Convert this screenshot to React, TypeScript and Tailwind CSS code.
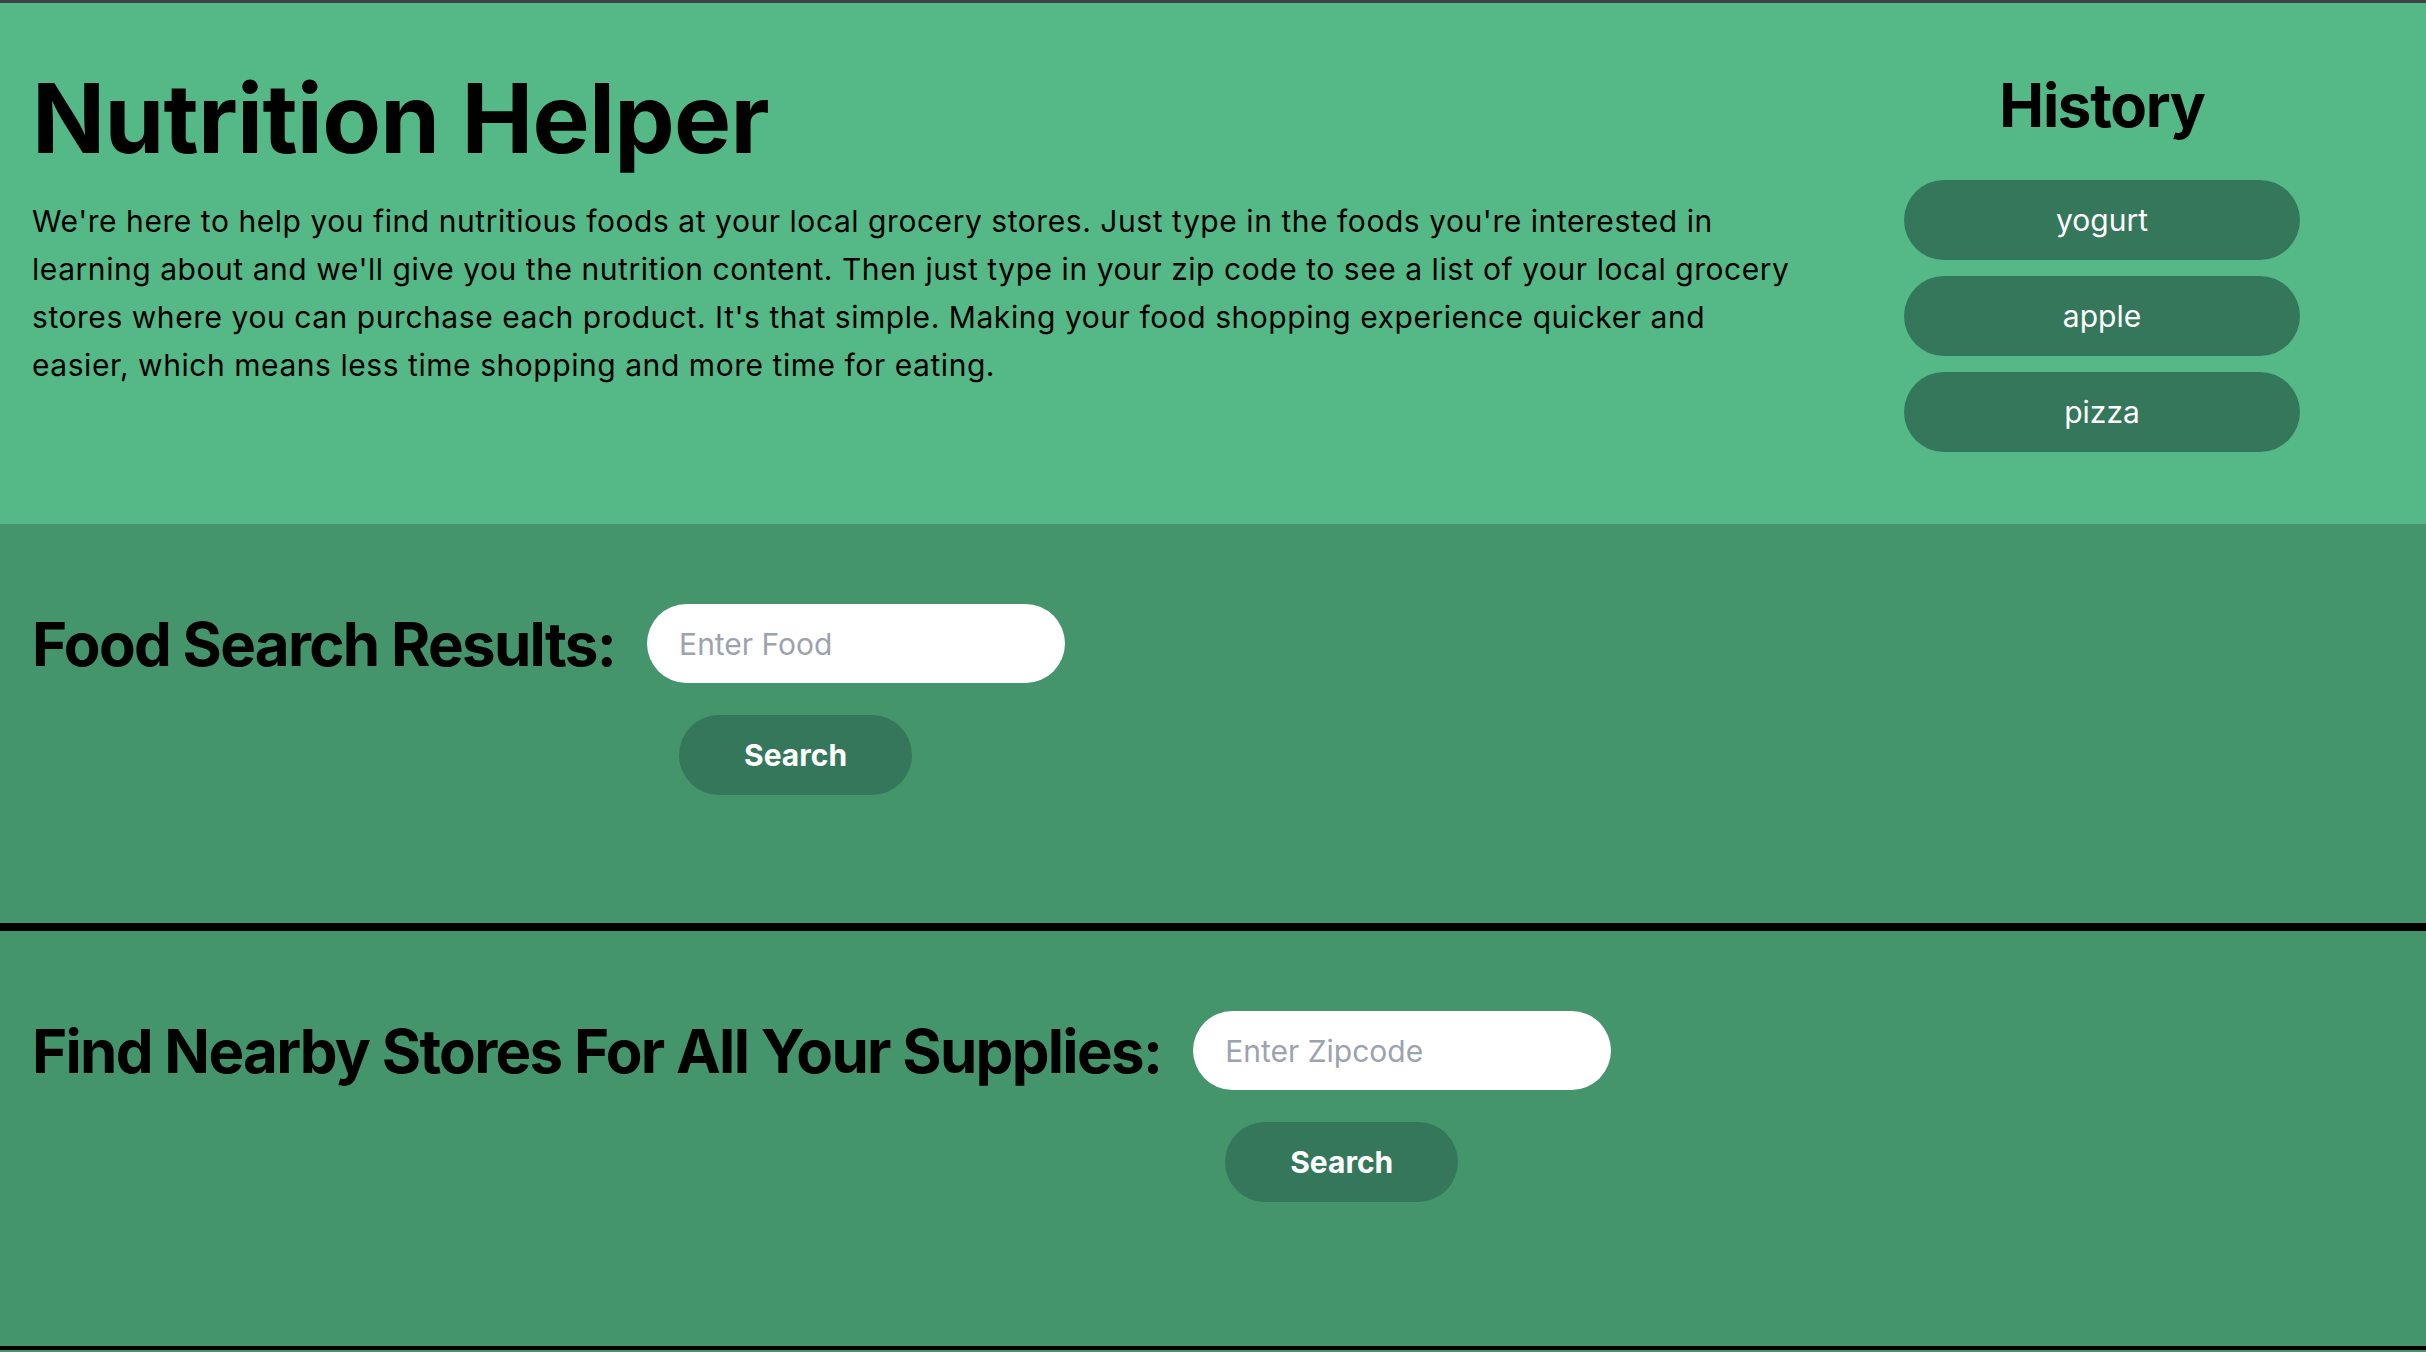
import React from "react";

const font = { fontFamily: "Inter, 'Noto Sans', 'Liberation Sans', sans-serif" };

function SearchRow({ title, placeholder }: { title: string; placeholder: string }) {
  return (
    <div className="flex items-start gap-8">
      <h2 className="h-[79px] flex items-center text-[60px] font-bold leading-none tracking-[-1.7px] text-black">
        {title}
      </h2>
      <div className="flex flex-col items-start gap-8">
        <input
          type="text"
          placeholder={placeholder}
          className="h-[79px] w-[418px] rounded-full bg-white pl-8 text-[30px] text-black placeholder:text-[#9ca3af] outline-none"
        />
        <button className="ml-8 h-[80px] w-[233px] rounded-full bg-[#35775b] text-[30px] font-bold text-white">
          Search
        </button>
      </div>
    </div>
  );
}

export default function App() {
  return (
    <div style={font} className="min-h-screen w-full bg-[#44946c]">
      <div className="h-[3px] bg-[#3d4145]" />
      <header className="flex items-start justify-between bg-[#54b887] pl-8 pr-[126px] pt-[67px] pb-[72px]">
        <div className="w-[1790px]">
          <h1 className="text-[96px] font-bold leading-none tracking-[-0.7px] text-black">Nutrition Helper</h1>
          <p className="mt-[31px] w-[1768px] text-[30px] leading-[48px] tracking-[0.55px] text-black">
            We're here to help you find nutritious foods at your local grocery stores. Just type in the foods you're
            interested in learning about and we'll give you the nutrition content. Then just type in your zip code to
            see a list of your local grocery stores where you can purchase each product. It's that simple. Making your
            food shopping experience quicker and easier, which means less time shopping and more time for eating.
          </p>
        </div>
        <div className="flex w-[396px] flex-col items-center pt-[5px]">
          <h2 className="text-[60px] font-bold leading-none tracking-[-1.3px] text-black">History</h2>
          <div className="mt-[45px] flex w-full flex-col gap-4">
            {["yogurt", "apple", "pizza"].map((item) => (
              <button
                key={item}
                className="h-[80px] w-full rounded-full bg-[#35775b] text-[30px] text-white"
              >
                {item}
              </button>
            ))}
          </div>
        </div>
      </header>
      <section className="bg-[#44946c] px-8 pt-20 pb-[128px]">
        <SearchRow title="Food Search Results:" placeholder="Enter Food" />
      </section>
      <section className="border-t-8 border-b-4 border-black bg-[#44946c] px-8 pt-20 pb-[144px]">
        <SearchRow title="Find Nearby Stores For All Your Supplies:" placeholder="Enter Zipcode" />
      </section>
    </div>
  );
}
